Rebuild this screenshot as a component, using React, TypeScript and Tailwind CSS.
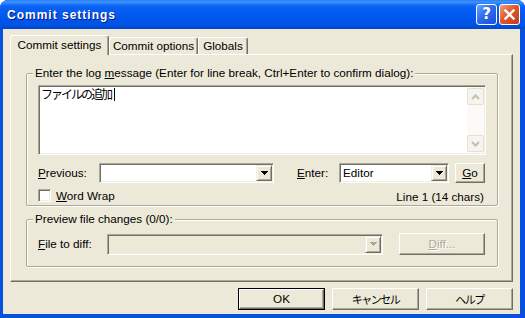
import type { ReactNode } from 'react'

// classic 3D borders
const sunken =
  'border border-t-[#ACA899] border-l-[#ACA899] border-r-white border-b-white shadow-[inset_1px_1px_0_#716F64,inset_-1px_-1px_0_#F1EFE2]'
const raised =
  'border border-t-white border-l-white border-r-[#716F64] border-b-[#716F64] shadow-[inset_-1px_-1px_0_#ACA899]'
const etched = 'border border-[#ACA899] shadow-[inset_1px_1px_0_white,1px_1px_0_white]'

function Ul({ children }: { children: ReactNode }) {
  return <span className="underline decoration-1 underline-offset-[1px]">{children}</span>
}

function DownArrow({ disabled }: { disabled?: boolean }) {
  const fill = disabled ? '#ACA899' : '#000000'
  return (
    <svg width="7" height="4" viewBox="0 0 7 4" shapeRendering="crispEdges">
      <rect x="0" y="0" width="7" height="1" fill={fill} />
      <rect x="1" y="1" width="5" height="1" fill={fill} />
      <rect x="2" y="2" width="3" height="1" fill={fill} />
      <rect x="3" y="3" width="1" height="1" fill={fill} />
    </svg>
  )
}

function Combo({ value, disabled, className }: { value?: string; disabled?: boolean; className: string }) {
  return (
    <div className={`${sunken} ${className} h-[20px] p-px flex ${disabled ? 'bg-[#ECE9D8]' : 'bg-white'}`}>
      <div className="flex-1 pl-[2px] leading-[16px] truncate">{value}</div>
      <div
        className={`w-[16px] h-full flex items-center justify-center bg-[#ECE9D8] border border-t-[#F1EFE2] border-l-[#F1EFE2] border-r-[#716F64] border-b-[#716F64] shadow-[inset_1px_1px_0_white,inset_-1px_-1px_0_#ACA899]`}
      >
        <DownArrow disabled={disabled} />
      </div>
    </div>
  )
}

function Chevron({ up }: { up?: boolean }) {
  return (
    <svg width="9" height="6" viewBox="0 0 9 6">
      <polyline
        points={up ? '1,5 4.5,1.5 8,5' : '1,1 4.5,4.5 8,1'}
        fill="none"
        stroke="#C3C0B1"
        strokeWidth="2"
      />
    </svg>
  )
}

function GroupBox({ label, className, children }: { label: ReactNode; className: string; children: ReactNode }) {
  return (
    <div className={`${etched} rounded-[2px] flex flex-col px-[11px] ${className}`}>
      <div className="-mt-[8px] -ml-[5px] self-start px-[2px] bg-[#ECE9D8] leading-[14px]">{label}</div>
      {children}
    </div>
  )
}

export default function App() {
  return (
    <div className="w-[525px] h-[318px] bg-white font-['Liberation_Sans','Noto_Sans_CJK_JP',sans-serif] text-[11.7px] text-black">
      <div className="w-full h-full flex flex-col rounded-t-[8px] bg-[#0A50DE] overflow-hidden">
        {/* ── Title bar ── */}
        <div className="h-[29px] flex items-center pl-[7px] pr-[5px] bg-[linear-gradient(to_bottom,#2E7BF6_0%,#3D95FF_7%,#0B63F4_20%,#0058EE_55%,#0053E4_85%,#0046CC_100%)]">
          <span className="text-white font-bold text-[12px] tracking-[1px] [text-shadow:1px_1px_0_#0A1883] font-['Liberation_Sans',sans-serif]">
            Commit settings
          </span>
          <div className="ml-auto flex gap-[2px]">
            <div className="w-[21px] h-[21px] rounded-[3px] border border-white bg-[linear-gradient(135deg,#6AA6FF_0%,#2C6CF0_45%,#1A4FD4_100%)] flex items-center justify-center text-white font-bold text-[15px] leading-none font-['DejaVu_Sans',sans-serif]">
              ?
            </div>
            <div className="w-[21px] h-[21px] rounded-[3px] border border-white bg-[linear-gradient(135deg,#F0A07E_0%,#E0582F_45%,#C63C14_100%)] flex items-center justify-center">
              <svg width="11" height="11" viewBox="0 0 11 11">
                <path d="M1.5 1.5l8 8M9.5 1.5l-8 8" stroke="white" strokeWidth="2.4" strokeLinecap="square" />
              </svg>
            </div>
          </div>
        </div>

        {/* ── Client area ── */}
        <div className="ml-[3px] mr-[5px] h-[285px] bg-[#ECE9D8] flex flex-col px-[7px] pt-[6px]">
          {/* Tabs */}
          <div className="flex items-end h-[19px]">
            <div className="relative z-10 -mb-px h-[20px] w-[99px] rounded-t-[3px] border-t border-l border-t-white border-l-white border-r border-r-[#716F64] shadow-[inset_-1px_0_0_#ACA899] bg-[#ECE9D8] flex items-center justify-center pb-[2px]">
              Commit settings
            </div>
            <div className="h-[17px] w-[89px] rounded-t-[3px] border-t border-l border-t-white border-l-white border-r border-r-[#716F64] shadow-[inset_-1px_0_0_#ACA899] flex items-center justify-center">
              Commit options
            </div>
            <div className="h-[17px] w-[50px] rounded-t-[3px] border-t border-l border-t-white border-l-white border-r border-r-[#716F64] shadow-[inset_-1px_0_0_#ACA899] flex items-center justify-center">
              Globals
            </div>
          </div>

          {/* Tab panel */}
          <div className={`${raised} h-[228px] flex flex-col pt-[18px] pl-[15px] pr-[14px]`}>
            <GroupBox
              className="pb-[3px]"
              label={
                <>
                  Enter the log <Ul>m</Ul>essage (Enter for line break, Ctrl+Enter to confirm dialog):
                </>
              }
            >
              {/* Log message */}
              <div className={`${sunken} mt-[5px] h-[70px] bg-white flex p-px`}>
                <div className="flex-1 pl-px flex items-start">
                  <span className="font-['Noto_Sans_CJK_JP',sans-serif] text-[12px] tracking-[-2px] leading-[14px]">
                    ファイルの追加
                  </span>
                  <span className="ml-[3px] mt-[1px] w-px h-[13px] bg-black" />
                </div>
                <div className="w-[17px] bg-[#FBFAF6] flex flex-col justify-between py-px">
                  <div className="h-[17px] rounded-[2px] border border-[#E3E1D6] bg-[#F5F4EE] flex items-center justify-center">
                    <Chevron up />
                  </div>
                  <div className="h-[17px] rounded-[2px] border border-[#E3E1D6] bg-[#F5F4EE] flex items-center justify-center">
                    <Chevron />
                  </div>
                </div>
              </div>

              {/* Previous / Enter */}
              <div className="mt-[8px] h-[20px] flex items-center">
                <div className="w-[61px]">
                  <Ul>P</Ul>revious:
                </div>
                <Combo className="w-[175px]" />
                <div className="ml-[23px] w-[42px]">
                  <Ul>E</Ul>nter:
                </div>
                <Combo className="w-[110px]" value="Editor" />
                <div className={`${raised} ml-[6px] w-[30px] h-[20px] flex items-center justify-center`}>
                  <Ul>G</Ul>o
                </div>
              </div>

              {/* Word wrap / counter */}
              <div className="mt-[6px] h-[13px] flex items-center">
                <div className={`${sunken} w-[13px] h-[13px] bg-white`} />
                <div className="ml-[5px] leading-[13px]">
                  <Ul>W</Ul>ord Wrap
                </div>
                <div className="ml-auto mr-[2px] leading-[13px] mt-[2px]">Line 1 (14 chars)</div>
              </div>
            </GroupBox>

            <GroupBox className="mt-[13px] pb-[11px]" label="Preview file changes (0/0):">
              <div className="mt-[7px] h-[22px] flex items-center">
                <div className="w-[69px]">
                  <Ul>F</Ul>ile to diff:
                </div>
                <Combo className="w-[276px] h-[21px]" disabled />
                <div
                  className={`${raised} ml-[16px] w-[86px] h-[22px] flex items-center justify-center text-[#ACA899] [text-shadow:1px_1px_0_white]`}
                >
                  <span>
                    <Ul>D</Ul>iff...
                  </span>
                </div>
              </div>
            </GroupBox>
          </div>

          {/* Dialog buttons */}
          <div className="mt-[6px] flex justify-end gap-[7px]">
            <div className="w-[87px] h-[22px] border border-black">
              <div className={`${raised} h-full flex items-center justify-center`}>OK</div>
            </div>
            <div className={`${raised} w-[87px] h-[22px] flex items-center justify-center font-['Noto_Sans_CJK_JP',sans-serif] text-[11px] tracking-[-1.5px]`}>
              キャンセル
            </div>
            <div className={`${raised} w-[87px] h-[22px] flex items-center justify-center font-['Noto_Sans_CJK_JP',sans-serif] text-[11px] tracking-[-1.5px]`}>
              ヘルプ
            </div>
          </div>
        </div>
      </div>
    </div>
  )
}
